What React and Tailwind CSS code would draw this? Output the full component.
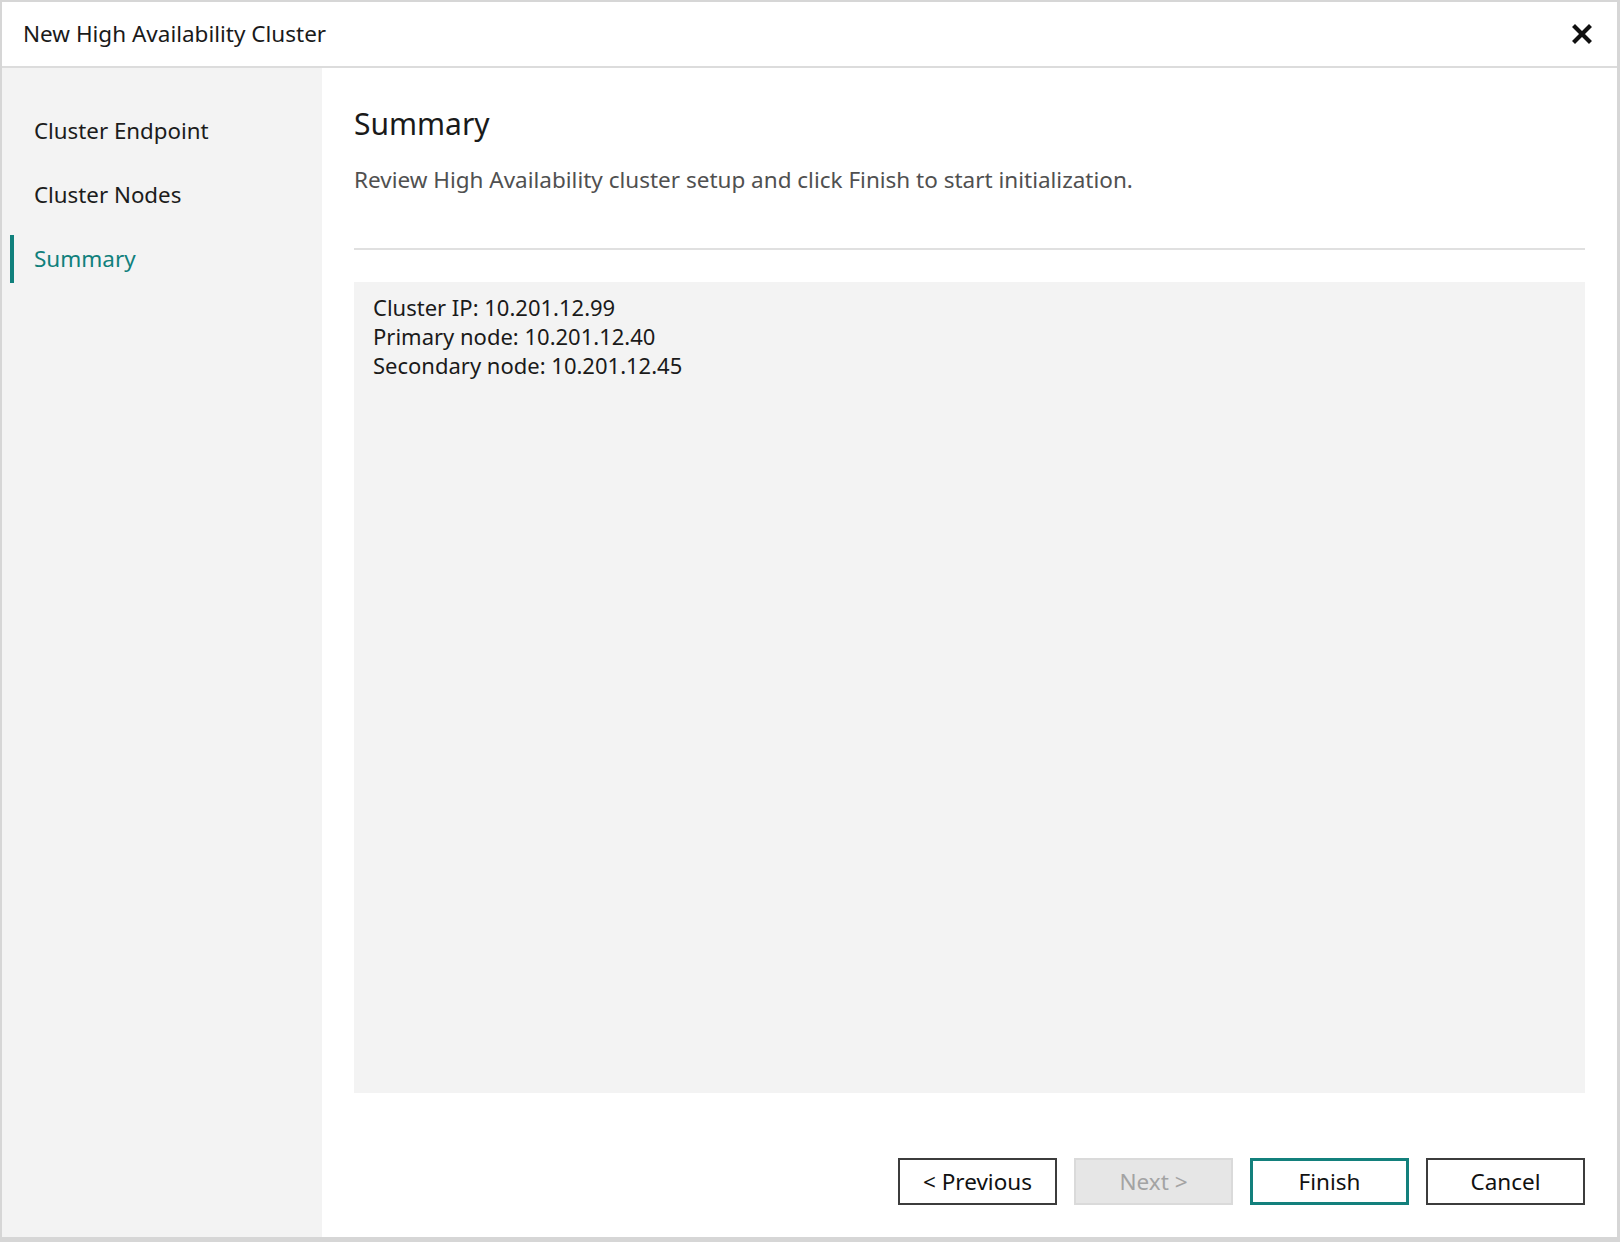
import React from "react";

const font = { fontFamily: '"Noto Sans", "Open Sans", sans-serif' };

function CloseIcon() {
  return (
    <svg width="22" height="22" viewBox="0 0 22 22" aria-hidden="true">
      <path d="M4 4 L18 18 M18 4 L4 18" stroke="#111" strokeWidth="4.2" strokeLinecap="square" fill="none" />
    </svg>
  );
}

function NavItem({ label, active }) {
  return (
    <div className="flex h-[64px] items-center pl-[8px]">
      <div className={active ? "h-[48px] w-[4px] bg-[#10807c]" : "h-[48px] w-[4px]"} />
      <span className={active ? "ml-[20px] text-[22.5px] text-[#10807c]" : "ml-[20px] text-[22.3px] text-[#1c1c1c]"}>
        {label}
      </span>
    </div>
  );
}

function Btn({ children, variant }) {
  const base = "flex h-[47px] w-[159px] items-center justify-center text-[22.5px]";
  if (variant === "disabled")
    return <div className={`${base} border-2 border-[#dadada] bg-[#e6e6e6] text-[#a3a3a3]`}>{children}</div>;
  if (variant === "primary")
    return <div className={`${base} border-[3px] border-[#13807c] bg-white text-[#111]`}>{children}</div>;
  return <div className={`${base} border-2 border-[#3c3c3c] bg-white text-[#111]`}>{children}</div>;
}

export default function App() {
  return (
    <div className="h-[1242px] w-[1620px] bg-[#d6d6d6] pb-[5px] pl-[2px] pr-[3px] pt-[2px]" style={font}>
      <div className="flex h-full flex-col bg-white">
        <div className="flex h-[66px] shrink-0 items-center justify-between border-b-2 border-[#dcdcdc] pl-[21px] pr-[24px]">
          <span className="text-[22.5px] text-[#1a1a1a]">New High Availability Cluster</span>
          <CloseIcon />
        </div>
        <div className="flex min-h-0 flex-1">
          <div className="w-[320px] shrink-0 bg-[#f3f3f3] pt-[31px]">
            <NavItem label="Cluster Endpoint" />
            <NavItem label="Cluster Nodes" />
            <NavItem label="Summary" active />
          </div>
          <div className="flex min-w-0 flex-1 flex-col px-[32px] pb-[32px] pt-[37px]">
            <h1 className="h-[38px] text-[30px] leading-[38px] text-[#1a1a1a]">Summary</h1>
            <p className="mt-[22px] h-[30px] text-[22.5px] leading-[30px] text-[#505050]">
              Review High Availability cluster setup and click Finish to start initialization.
            </p>
            <div className="mt-[53px] h-[2px] bg-[#e0e0e0]" />
            <div className="mt-[32px] flex-1 bg-[#f3f3f3] pl-[19px] pt-[11px] text-[22px] leading-[29px] text-[#1a1a1a]">
              <div>Cluster IP: 10.201.12.99</div>
              <div>Primary node: 10.201.12.40</div>
              <div>Secondary node: 10.201.12.45</div>
            </div>
            <div className="mt-[65px] flex justify-end gap-[17px]">
              <Btn>&lt; Previous</Btn>
              <Btn variant="disabled">Next &gt;</Btn>
              <Btn variant="primary">Finish</Btn>
              <Btn>Cancel</Btn>
            </div>
          </div>
        </div>
      </div>
    </div>
  );
}
